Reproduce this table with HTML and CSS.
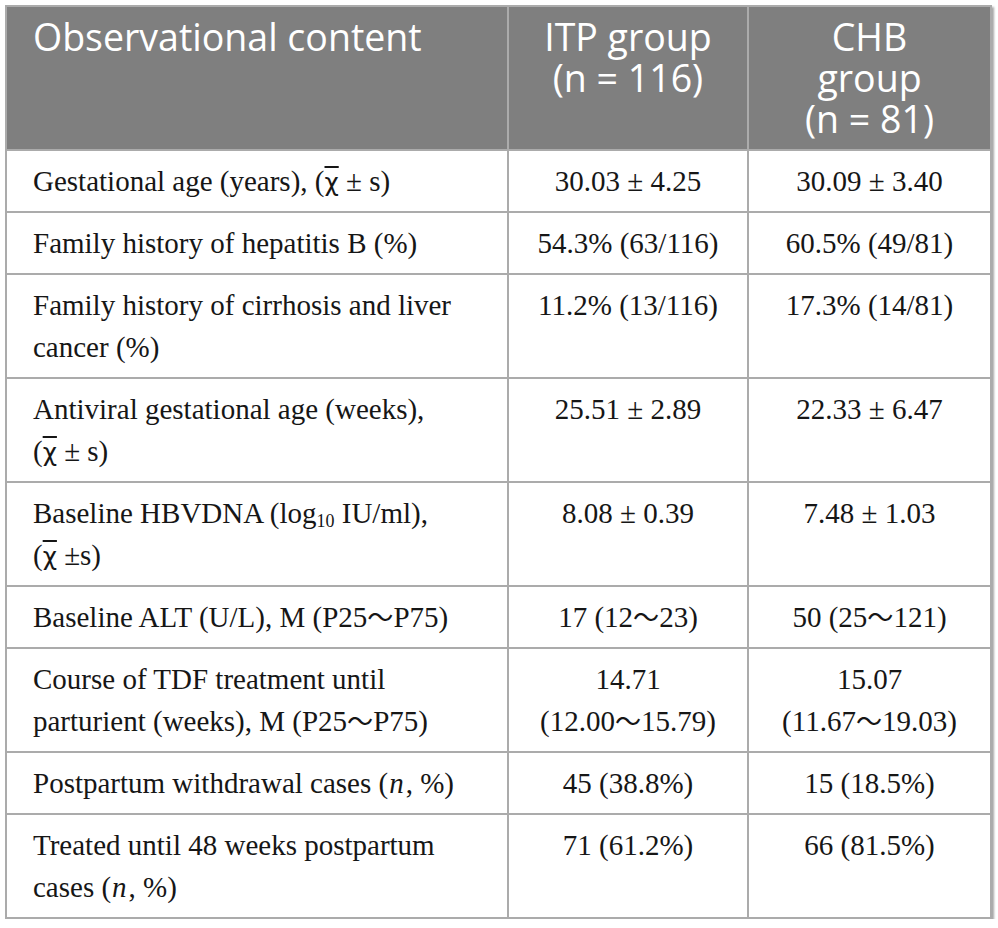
FILE: index.html
```html
<!DOCTYPE html>
<html lang="en">
<head>
<meta charset="utf-8">
<title>Table</title>
<link rel="stylesheet" href="styles.css">
</head>
<body>
<div class="wrap">
<table class="data">
  <colgroup>
    <col class="c1">
    <col class="c2">
    <col class="c3">
  </colgroup>
  <thead>
    <tr>
      <th class="left">Observational content</th>
      <th>ITP group<br>(n = 116)</th>
      <th>CHB<br>group<br>(n = 81)</th>
    </tr>
  </thead>
  <tbody>
    <tr>
      <td class="left">Gestational age (years), <span class="nw">(<span class="mean">χ</span> ± s)</span></td>
      <td>30.03 ± 4.25</td>
      <td>30.09 ± 3.40</td>
    </tr>
    <tr>
      <td class="left">Family history of hepatitis B (%)</td>
      <td>54.3% (63/116)</td>
      <td>60.5% (49/81)</td>
    </tr>
    <tr>
      <td class="left">Family history of cirrhosis and liver cancer (%)</td>
      <td>11.2% (13/116)</td>
      <td>17.3% (14/81)</td>
    </tr>
    <tr>
      <td class="left">Antiviral gestational age (weeks), <span class="nw">(<span class="mean">χ</span> ± s)</span></td>
      <td>25.51 ± 2.89</td>
      <td>22.33 ± 6.47</td>
    </tr>
    <tr>
      <td class="left">Baseline HBVDNA (log<sub>10</sub> IU/ml), <span class="nw">(<span class="mean">χ</span> ±s)</span></td>
      <td>8.08 ± 0.39</td>
      <td>7.48 ± 1.03</td>
    </tr>
    <tr>
      <td class="left">Baseline ALT (U/L), M (P25<span class="tl">～</span>P75)</td>
      <td>17 (12<span class="tl">～</span>23)</td>
      <td>50 (25<span class="tl">～</span>121)</td>
    </tr>
    <tr>
      <td class="left">Course of TDF treatment until parturient (weeks), M (P25<span class="tl">～</span>P75)</td>
      <td>14.71<br>(12.00<span class="tl">～</span>15.79)</td>
      <td>15.07<br>(11.67<span class="tl">～</span>19.03)</td>
    </tr>
    <tr>
      <td class="left">Postpartum withdrawal cases (<i class="var">n</i>, %)</td>
      <td>45 (38.8%)</td>
      <td>15 (18.5%)</td>
    </tr>
    <tr>
      <td class="left">Treated until 48 weeks postpartum cases (<i class="var">n</i>, %)</td>
      <td>71 (61.2%)</td>
      <td>66 (81.5%)</td>
    </tr>
  </tbody>
</table>
</div>
</body>
</html>
```
FILE: styles.css
```css
html, body {
  margin: 0;
  padding: 0;
  background: #ffffff;
}

.wrap {
  padding: 5px 0 0 5px;
}

.data {
  border-collapse: collapse;
  width: 985px;
  table-layout: fixed;
  box-shadow: 2px 2px 2px rgba(0, 0, 0, 0.35);
}

.c1 { width: 502px; }
.c2 { width: 240px; }
.c3 { width: 243px; }

.data th,
.data td {
  border: 2px solid #ababab;
  vertical-align: top;
  text-align: center;
  padding: 9px 20px;
}

.data th {
  background: #7f7f7f;
  color: #ffffff;
  font-family: "Open Sans", "Noto Sans", sans-serif;
  font-weight: 400;
  font-size: 37.5px;
  line-height: 41px;
  padding-top: 9px;
  padding-bottom: 10px;
}

.data td {
  color: #161616;
  font-family: "Liberation Serif", "Times New Roman", serif;
  font-size: 29px;
  line-height: 42px;
}

.data .left {
  text-align: left;
  padding-left: 26px;
}

.nw {
  white-space: nowrap;
}

.var {
  padding: 0 2px 0 1px;
}

.mean {
  font-family: "DejaVu Sans", sans-serif;
  font-size: 0.85em;
  line-height: 0;
  text-decoration: overline;
  text-decoration-thickness: 2px;
}

.tl {
  font-family: "Noto Sans CJK SC", sans-serif;
  font-size: 0.9em;
  line-height: 0;
}

sub {
  font-size: 0.62em;
  line-height: 0;
  vertical-align: -0.25em;
}
```
